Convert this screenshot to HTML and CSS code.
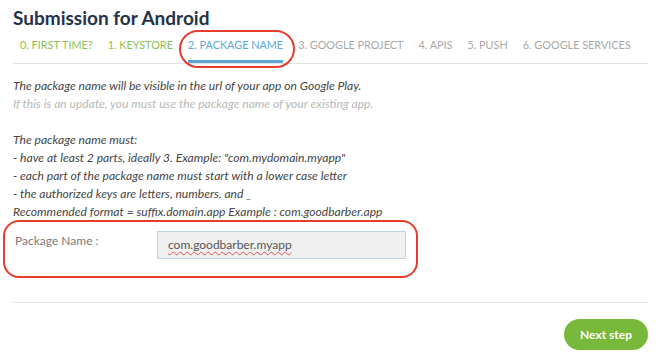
FILE: index.html
```html
<!DOCTYPE html>
<html lang="en">
<head>
  <meta charset="UTF-8">
  <title>Submission for Android</title>
  <link rel="stylesheet" href="styles.css">
</head>
<body>
  <div class="page">
    <h1>Submission for Android</h1>

    <div class="tabs">
      <span class="tab done">0. FIRST TIME?</span>
      <span class="tab done">1. KEYSTORE</span>
      <span class="tab active">2. PACKAGE NAME</span>
      <span class="tab">3. GOOGLE PROJECT</span>
      <span class="tab">4. APIS</span>
      <span class="tab">5. PUSH</span>
      <span class="tab">6. GOOGLE SERVICES</span>
    </div>

    <div class="info">
      <p class="strong">The package name will be visible in the url of your app on Google Play.</p>
      <p class="light">If this is an update, you must use the package name of your existing app.</p>
      <p class="gap"></p>
      <p class="strong">The package name must:</p>
      <p class="strong">- have at least 2 parts, ideally 3. Example: "com.mydomain.myapp"</p>
      <p class="strong">- each part of the package name must start with a lower case letter</p>
      <p class="strong">- the authorized keys are letters, numbers, and _</p>
      <p class="strong">Recommended format = suffix.domain.app Example : com.goodbarber.app</p>
    </div>

    <div class="field">
      <label for="pkg">Package Name :</label>
      <div class="input"><span class="typo">com.goodbarber.myapp</span></div>
    </div>

    <div class="footer">
      <button>Next step</button>
    </div>
  </div>
</body>
</html>
```

FILE: styles.css
```css
body {
  margin: 0;
  font-family: Lato, "Open Sans", sans-serif;
  background: white;
}

.page {
  padding: 3px 11px 0 13px;
}

h1 {
  margin: 0;
  font-size: 19px;
  font-weight: bold;
  color: #263248;
  line-height: 30px;
}

.tabs {
  display: flex;
  gap: 15px;
  padding: 5px 0 0 7px;
  height: 25px;
  border-bottom: 1px solid #e2e2e2;
}

.tab {
  font-size: 10.85px;
  color: #a8a8a8;
  line-height: 14px;
  height: 14px;
  white-space: nowrap;
  position: relative;
}

.tab.done {
  color: #8cc152;
}

.tab.active {
  color: #5da7d8;
  padding-bottom: 8px;
  border-bottom: 3px solid #5da7d8;
}

.tab.active::before {
  content: "";
  position: absolute;
  left: -9px;
  right: -12px;
  top: -8px;
  bottom: -8px;
  border: 2px solid #e63b2e;
  border-radius: 20px;
}

.info {
  padding-top: 13px;
  font-size: 12.1px;
  font-style: italic;
  line-height: 18px;
}

.info p {
  margin: 0;
}

.strong {
  color: #454545;
}

.light {
  color: #b8b8b8;
}

.gap {
  height: 18px;
}

.field {
  display: flex;
  align-items: flex-start;
  margin: -1px 0 0 -10px;
  width: 401px;
  height: 45px;
  padding: 9px 0 0 10px;
  border: 2px solid #e63b2e;
  border-radius: 16px;
  font-size: 12px;
}

.field label {
  width: 142px;
  color: #7a7a7a;
  padding-top: 2px;
}

.input {
  width: 237px;
  height: 26px;
  background: #f0f0f0;
  border: 1px solid #b9d5ec;
  color: #555;
  padding-left: 10px;
  line-height: 26px;
}

.typo {
  text-decoration: underline wavy #e05050;
  text-decoration-thickness: 1px;
  text-underline-offset: 2px;
}

.footer {
  margin-top: 24px;
  border-top: 1px solid #e6e6e6;
  display: flex;
  justify-content: flex-end;
  padding-top: 16px;
}

button {
  background: #78b83a;
  color: white;
  border: none;
  border-radius: 16px;
  font-family: Lato, sans-serif;
  font-weight: bold;
  font-size: 12px;
  width: 84px;
  height: 31px;
}
```
